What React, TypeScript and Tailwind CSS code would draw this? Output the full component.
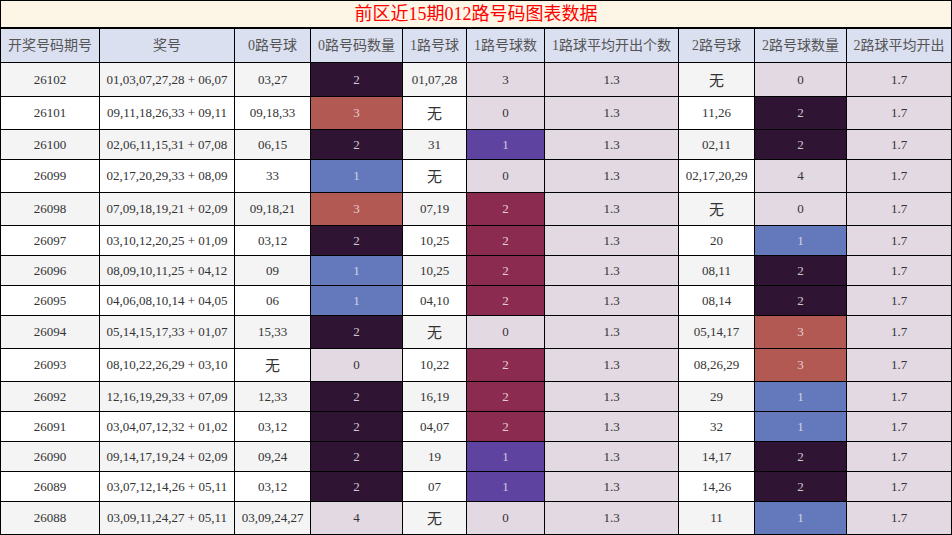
import React from "react";

type Row = {
  id: string;
  nums: string;
  r0: string;
  c0: number;
  r1: string;
  c1: number;
  r2: string;
  c2: number;
};

const rows: Row[] = [
  { id: "26102", nums: "01,03,07,27,28 + 06,07", r0: "03,27", c0: 2, r1: "01,07,28", c1: 3, r2: "无", c2: 0 },
  { id: "26101", nums: "09,11,18,26,33 + 09,11", r0: "09,18,33", c0: 3, r1: "无", c1: 0, r2: "11,26", c2: 2 },
  { id: "26100", nums: "02,06,11,15,31 + 07,08", r0: "06,15", c0: 2, r1: "31", c1: 1, r2: "02,11", c2: 2 },
  { id: "26099", nums: "02,17,20,29,33 + 08,09", r0: "33", c0: 1, r1: "无", c1: 0, r2: "02,17,20,29", c2: 4 },
  { id: "26098", nums: "07,09,18,19,21 + 02,09", r0: "09,18,21", c0: 3, r1: "07,19", c1: 2, r2: "无", c2: 0 },
  { id: "26097", nums: "03,10,12,20,25 + 01,09", r0: "03,12", c0: 2, r1: "10,25", c1: 2, r2: "20", c2: 1 },
  { id: "26096", nums: "08,09,10,11,25 + 04,12", r0: "09", c0: 1, r1: "10,25", c1: 2, r2: "08,11", c2: 2 },
  { id: "26095", nums: "04,06,08,10,14 + 04,05", r0: "06", c0: 1, r1: "04,10", c1: 2, r2: "08,14", c2: 2 },
  { id: "26094", nums: "05,14,15,17,33 + 01,07", r0: "15,33", c0: 2, r1: "无", c1: 0, r2: "05,14,17", c2: 3 },
  { id: "26093", nums: "08,10,22,26,29 + 03,10", r0: "无", c0: 0, r1: "10,22", c1: 2, r2: "08,26,29", c2: 3 },
  { id: "26092", nums: "12,16,19,29,33 + 07,09", r0: "12,33", c0: 2, r1: "16,19", c1: 2, r2: "29", c2: 1 },
  { id: "26091", nums: "03,04,07,12,32 + 01,02", r0: "03,12", c0: 2, r1: "04,07", c1: 2, r2: "32", c2: 1 },
  { id: "26090", nums: "09,14,17,19,24 + 02,09", r0: "09,24", c0: 2, r1: "19", c1: 1, r2: "14,17", c2: 2 },
  { id: "26089", nums: "03,07,12,14,26 + 05,11", r0: "03,12", c0: 2, r1: "07", c1: 1, r2: "14,26", c2: 2 },
  { id: "26088", nums: "03,09,11,24,27 + 05,11", r0: "03,09,24,27", c0: 4, r1: "无", c1: 0, r2: "11", c2: 1 },
];

const LIGHT = "bg-[#e3d9e3] text-[#333]";

function color02(n: number): string {
  if (n === 1) return "bg-[#6479bc] text-[#cfd3e6]";
  if (n === 2) return "bg-[#2f1433] text-[#cfc6d0]";
  if (n === 3) return "bg-[#b35953] text-[#e6cfcd]";
  return LIGHT;
}

function color1(n: number): string {
  if (n === 1) return "bg-[#5e43a1] text-[#cfc8e4]";
  if (n === 2) return "bg-[#8b2b4f] text-[#e3cbd4]";
  return LIGHT;
}

const cols = "grid grid-cols-[99px_135px_76px_92px_64px_78px_134px_76px_92px_105px]";
const cell = "flex items-center justify-center border-r border-b border-black whitespace-nowrap overflow-hidden";

const headers = [
  "开奖号码期号",
  "奖号",
  "0路号球",
  "0路号码数量",
  "1路号球",
  "1路号球数",
  "1路球平均开出个数",
  "2路号球",
  "2路号球数量",
  "2路球平均开出",
];

function Val({ v }: { v: string }) {
  if (v === "无") return <span className="text-[15px] leading-none pt-[3px]">无</span>;
  return <span>{v}</span>;
}

export default function App() {
  return (
    <div
      className="w-[952px] h-[535px] overflow-hidden bg-white"
      style={{ fontFamily: '"Liberation Serif", "Noto Sans CJK SC", serif' }}
    >
      <div className="w-[952px] border-t border-l border-black">
        <div className="h-[28px] border-r border-b-2 border-black bg-[#fdf6e7] flex items-center justify-center text-[18px] text-[#ff0000] leading-none">
          前区近15期012路号码图表数据
        </div>
        <div className={`${cols} h-[34px] bg-[#dbe0f1] text-[14px] text-[#555]`}>
          {headers.map((h, i) => (
            <div key={i} className={cell}>
              {h}
            </div>
          ))}
        </div>
        {rows.map((r, idx) => {
          const hasWu = r.r0 === "无" || r.r1 === "无" || r.r2 === "无";
          const h = idx === 0 ? "h-[34px]" : hasWu ? "h-[33px]" : "h-[30px]";
          const stripe = idx % 2 === 0 ? "bg-[#f4f4f4]" : "bg-white";
          return (
            <div key={r.id} className={`${cols} ${h} text-[13px] text-[#333]`}>
              <div className={`${cell} ${stripe}`}>{r.id}</div>
              <div className={`${cell} ${stripe}`}>{r.nums}</div>
              <div className={`${cell} ${stripe}`}>
                <Val v={r.r0} />
              </div>
              <div className={`${cell} ${color02(r.c0)}`}>{r.c0}</div>
              <div className={`${cell} ${stripe}`}>
                <Val v={r.r1} />
              </div>
              <div className={`${cell} ${color1(r.c1)}`}>{r.c1}</div>
              <div className={`${cell} ${LIGHT}`}>1.3</div>
              <div className={`${cell} ${stripe}`}>
                <Val v={r.r2} />
              </div>
              <div className={`${cell} ${color02(r.c2)}`}>{r.c2}</div>
              <div className={`${cell} ${LIGHT}`}>1.7</div>
            </div>
          );
        })}
      </div>
    </div>
  );
}
